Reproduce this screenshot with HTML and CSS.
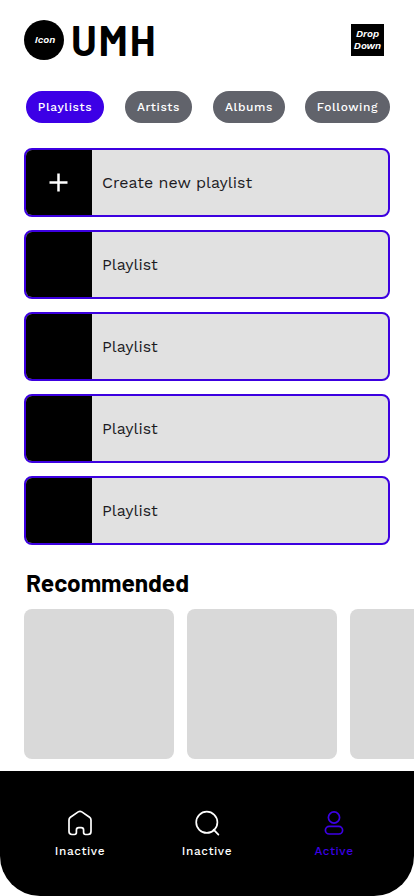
FILE: index.html
```
<!DOCTYPE html>
<html lang="en">
<head>
<meta charset="utf-8">
<meta name="viewport" content="width=device-width, initial-scale=1">
<title>UMH</title>
<link rel="stylesheet" href="styles.css">
</head>
<body>
<div class="screen">
  <header class="header">
    <div class="logo">Icon</div>
    <h1 class="brand">UMH</h1>
    <button class="dropdown">Drop<br>Down</button>
  </header>
  <div class="tabs">
    <button class="tab tab-playlists">Playlists</button>
    <button class="tab tab-artists">Artists</button>
    <button class="tab tab-albums">Albums</button>
    <button class="tab tab-following">Following</button>
  </div>
  <main class="playlists">
    <div class="row"><div class="thumb"><svg width="20" height="20" viewBox="0 0 20 20"><path d="M9.5 .5v18M.5 9.5h18" stroke="#fff" stroke-width="2.5"/></svg></div><span class="row-name">Create new playlist</span></div>
    <div class="row"><div class="thumb"></div><span class="row-name">Playlist</span></div>
    <div class="row"><div class="thumb"></div><span class="row-name">Playlist</span></div>
    <div class="row"><div class="thumb"></div><span class="row-name">Playlist</span></div>
    <div class="row"><div class="thumb"></div><span class="row-name">Playlist</span></div>
  </main>
  <h2 class="heading">Recommended</h2>
  <div class="carousel">
    <div class="tile"></div><div class="tile"></div><div class="tile"></div>
  </div>
  <nav class="nav">
    <a class="nav-item">
      <svg width="28" height="28" viewBox="0 0 28 28"><path d="M12.2 2.9Q14 1.7 15.8 2.9L23.6 8.3Q25 9.3 25 11V22.5Q25 25.5 22 25.5H19.5Q17.6 25.5 17.6 23.6V21Q17.6 18.6 15.2 18.6H12.8Q10.4 18.6 10.4 21V23.6Q10.4 25.5 8.5 25.5H6Q3 25.5 3 22.5V11Q3 9.3 4.4 8.3Z"/></svg>
      <span>Inactive</span>
    </a>
    <a class="nav-item">
      <svg width="28" height="28" viewBox="0 0 28 28"><circle cx="13.8" cy="13.3" r="10.6"/><path d="M20.6 20.7L25.4 25.7"/></svg>
      <span>Inactive</span>
    </a>
    <a class="nav-item active">
      <svg width="28" height="28" viewBox="0 0 28 28"><circle cx="14" cy="8.5" r="5.6"/><rect x="5.4" y="17.4" width="17.2" height="7.6" rx="3.8"/></svg>
      <span>Active</span>
    </a>
  </nav>
</div>
</body>
</html>
```
FILE: styles.css
```
* { box-sizing: border-box; }
body { margin: 0; background: #fff; font-family: "Work Sans", Inter, "Liberation Sans", sans-serif; }
button { border: 0; padding: 0; }
.screen { width: 414px; height: 896px; overflow: hidden; display: flex; flex-direction: column; }
.header { display: flex; align-items: center; height: 80px; padding: 0 30px 0 24px; flex: none; }
.logo { width: 40px; height: 40px; border-radius: 50%; background: #000; color: #fff; font: italic 600 10px/40px "Work Sans", "Open Sans", sans-serif; text-align: center; padding-left: 2px; letter-spacing: 0; }
.brand { margin: 0 0 0 7px; font: 700 41px/48px Barlow, Roboto, sans-serif; letter-spacing: 1.8px; }
.dropdown { margin-left: auto; width: 33px; height: 32px; background: #000; color: #fff; font: italic 600 10px/12px "Work Sans", "Open Sans", sans-serif; letter-spacing: 0; }
.tabs { display: flex; gap: 21px; margin: 11px 24px 0 26px; flex: none; }
.tab { flex: none; height: 32px; border-radius: 16px; background: #61636b; color: #fff; font: 500 12px/32px "Work Sans", Inter, sans-serif; letter-spacing: 0.6px; white-space: nowrap; }
.tab-playlists { width: 78px; background: #3c00e6; }
.tab-artists { width: 67px; }
.tab-albums { width: 72px; }
.tab-following { width: 85px; margin-left: -1px; }
.playlists { display: flex; flex-direction: column; gap: 13px; margin: 25px 24px 0; flex: none; }
.row { height: 69px; border: 2px solid #3c00e0; border-radius: 8px; overflow: hidden; background: #e1e1e1; display: flex; align-items: center; }
.thumb { width: 66px; height: 100%; background: #000; display: flex; align-items: center; justify-content: center; }
.row-name { margin-left: 10px; font-size: 16px; line-height: 24px; color: #1c1b1f; letter-spacing: 0; }
.heading { margin: 21px 0 0 26px; font: 700 24.5px/32px Barlow, Roboto, sans-serif; height: 32px; letter-spacing: -0.05px; flex: none; }
.carousel { display: flex; gap: 13px; margin: 11px 0 0 24px; flex: none; }
.tile { width: 150px; height: 150px; flex: none; border-radius: 8px; background: #d9d9d9; }
.nav { display: flex; justify-content: center; margin-top: 12px; height: 125px; flex: none; background: #000; border-radius: 0 0 40px 40px; color: #fff; padding-top: 38px; }
.nav-item { width: 127px; display: flex; flex-direction: column; align-items: center; font-size: 11.8px; font-weight: 500; line-height: 16px; letter-spacing: 0.6px; }
.nav-item svg { fill: none; stroke: currentColor; stroke-width: 1.7; stroke-linecap: round; stroke-linejoin: round; margin-bottom: 6px; }
.nav-item.active { color: #3c00e6; }
```
